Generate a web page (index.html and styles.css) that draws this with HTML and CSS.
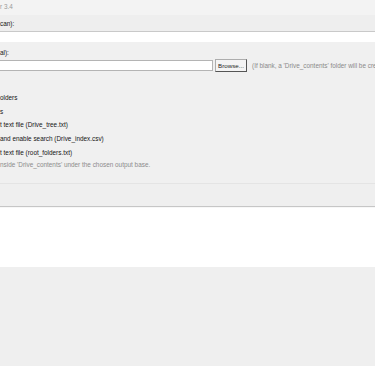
FILE: index.html
```html
<!DOCTYPE html>
<html lang="en">
<head>
    <meta charset="UTF-8">
    <title>Drive Contents Scanner 3.4</title>
    <link rel="stylesheet" href="styles.css">
</head>
<body>
    <div class="window">
        <div class="title">r 3.4</div>

        <div class="scan-row">can):</div>
        <div class="spacer"></div>

        <div class="output">
            <div class="label">al):</div>
            <div class="path-row">
                <input type="text" class="path-input">
                <button class="btn">Browse...</button>
                <span class="hint">(If blank, a 'Drive_contents' folder will be created here)</span>
            </div>

            <ul class="options">
                <li>olders</li>
                <li>s</li>
                <li>t text file (Drive_tree.txt)</li>
                <li>and enable search (Drive_index.csv)</li>
                <li>t text file (root_folders.txt)</li>
            </ul>
            <div class="note">nside 'Drive_contents' under the chosen output base.</div>
        </div>

        <div class="actions"></div>
        <div class="log"></div>
        <div class="status"></div>
    </div>
</body>
</html>
```

FILE: styles.css
```css
body {
    margin: 0;
    padding: 0;
    background: #efefef;
    font-family: "Liberation Sans", Arial, sans-serif;
    font-size: 6.4px;
    color: #151515;
    overflow: hidden;
}

.window {
    width: 375px;
    height: 366px;
    overflow: hidden;
    white-space: nowrap;
}

.title {
    height: 15px;
    line-height: 13px;
    background: #f3f3f3;
    color: #9a9a9a;
}

.scan-row {
    height: 16px;
    line-height: 18px;
    background: #eeeeee;
    border-bottom: 1px solid #c9c9c9;
    box-shadow: 0 1px 0 #f8f8f8;
}

.spacer {
    height: 10px;
    background: #ffffff;
}

.output {
    height: 141px;
    background: #f0f0f0;
    border-bottom: 1px solid #e4e4e4;
}

.label {
    height: 17px;
    line-height: 21px;
}

.path-row {
    display: flex;
    align-items: center;
    height: 13px;
}

.path-input {
    flex-shrink: 0;
    width: 213px;
    height: 11px;
    margin: 0 2px 0 0;
    padding: 0;
    box-sizing: border-box;
    border: 1px solid #b4b4b4;
    border-left: none;
    background: #ffffff;
}

.btn {
    flex-shrink: 0;
    width: 32px;
    height: 13px;
    padding: 0;
    margin: 0 5px 0 0;
    font-family: inherit;
    font-size: 6.2px;
    color: #1e1e1e;
    background: #f4f4f4;
    border: 1px solid #adadad;
    border-right-color: #555;
    border-bottom-color: #555;
}

.hint {
    flex-shrink: 0;
    color: #8a8a8a;
}

.options {
    list-style: none;
    margin: 18px 0 0 0;
    padding: 0;
}

.options li {
    height: 13.7px;
    line-height: 15px;
}

.note {
    color: #8c8c8c;
    line-height: 14px;
}

.actions {
    height: 22px;
    background: #efefef;
    border-bottom: 1px solid #c6c6c6;
    box-shadow: 0 1px 0 #f7f7f7;
}

.log {
    height: 59px;
    margin-top: 1px;
    background: #ffffff;
}

.status {
    height: 98px;
    background: #efefef;
}
```
